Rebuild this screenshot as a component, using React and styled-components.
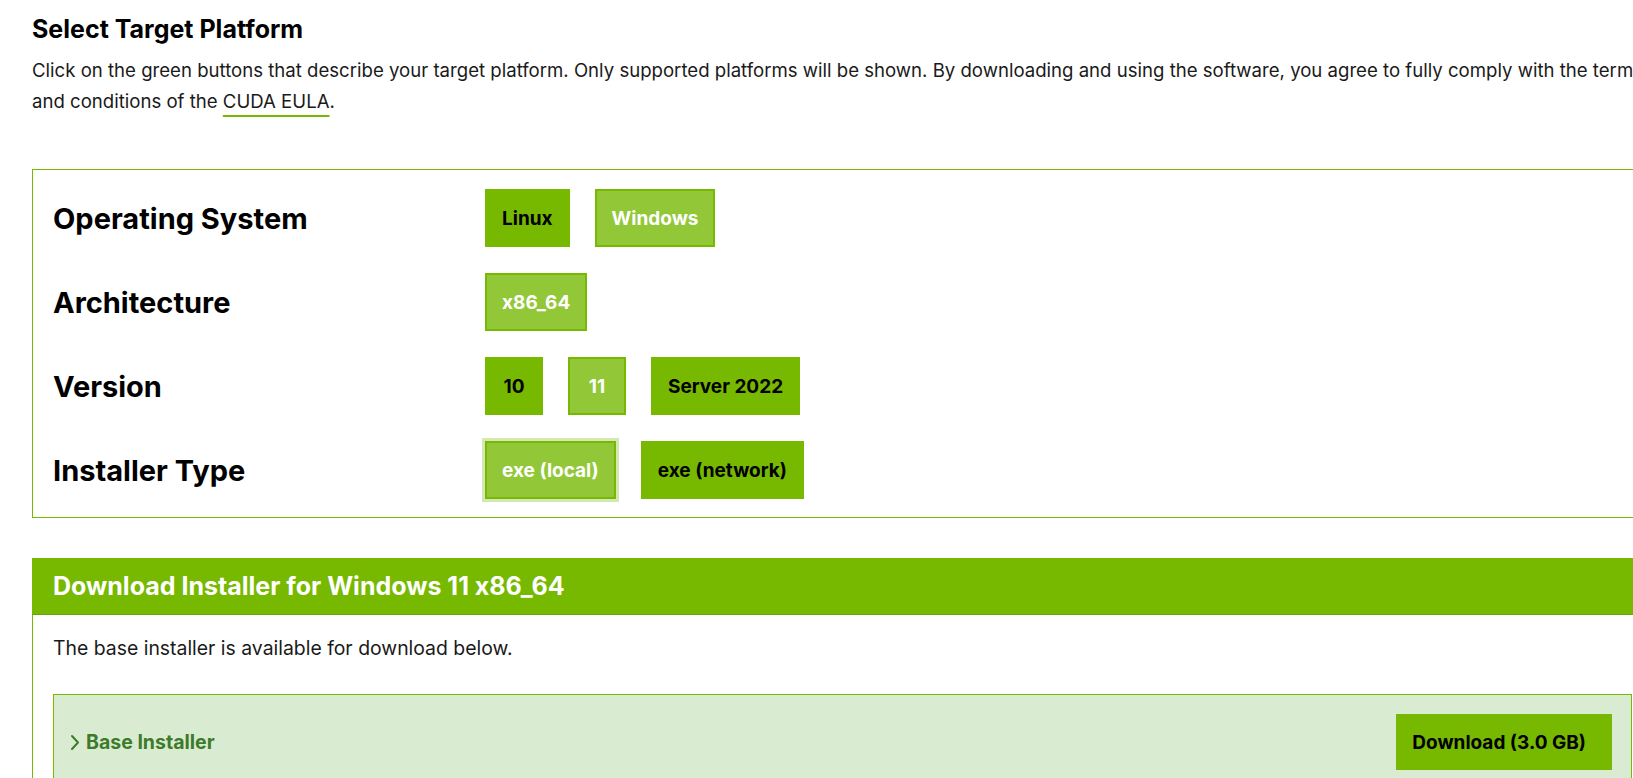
import React from "react";
import styled, { createGlobalStyle, css } from "styled-components";

const GREEN = "#76b900";
const GREEN_LIGHT = "#92c837";

const GlobalStyle = createGlobalStyle`
  html, body {
    margin: 0;
    padding: 0;
    background: #ffffff;
    overflow: hidden;
  }
  body {
    font-family: Inter, "Liberation Sans", Arial, sans-serif;
    font-feature-settings: "calt" 0;
    color: #1a1a1a;
  }
  * { box-sizing: border-box; }
`;

const Page = styled.main`
  width: 1620px;
  margin-left: 32px;
  padding-top: 14px;
`;

const Title = styled.h2`
  margin: 0;
  font-size: 25px;
  line-height: 30px;
  font-weight: 700;
  color: #000;
`;

const Intro = styled.p`
  margin: 11px 0 0;
  font-size: 18.6px;
  line-height: 31px;
  font-weight: 400;
  color: #1a1a1a;
`;

const EulaLink = styled.a`
  color: #1a1a1a;
  text-decoration: underline;
  text-decoration-color: ${GREEN};
  text-decoration-thickness: 2px;
  text-underline-offset: 7px;
`;

const SelectorBox = styled.section`
  margin-top: 52px;
  border: 1px solid ${GREEN};
  border-right: none;
  padding: 19px 20px 18px 20px;
  display: flex;
  flex-direction: column;
  gap: 26px;
`;

const SelectorRow = styled.div`
  display: grid;
  grid-template-columns: 432px 1fr;
  align-items: center;
  height: 58px;
`;

const RowLabel = styled.div`
  font-size: 29px;
  font-weight: 700;
  color: #000;
`;

const ButtonGroup = styled.div`
  display: flex;
  gap: 25px;
  height: 100%;
`;

const OptionButton = styled.button`
  font-family: inherit;
  font-feature-settings: "calt" 0;
  height: 58px;
  min-width: 58px;
  padding: 0 15px;
  font-size: 19px;
  font-weight: 700;
  border: 2px solid ${GREEN};
  background: ${GREEN};
  color: #000;
  cursor: pointer;
  ${(p) =>
    p.$selected &&
    css`
      background: ${GREEN_LIGHT};
      color: #fff;
    `}
  ${(p) =>
    p.$focused &&
    css`
      box-shadow: 0 0 0 3px #d3e8b2;
    `}
`;

const DownloadPanel = styled.section`
  margin-top: 40px;
  border-left: 1px solid ${GREEN};
`;

const DownloadHeader = styled.h3`
  margin: 0 0 0 -1px;
  height: 57px;
  display: flex;
  align-items: center;
  padding: 0 21px;
  background: ${GREEN};
  border-bottom: 1px solid #6aa400;
  color: #fff;
  font-size: 25px;
  font-weight: 700;
`;

const DownloadBody = styled.div`
  padding: 19px 20px 20px 20px;
`;

const BodyText = styled.p`
  margin: 0;
  font-size: 19.4px;
  line-height: 28px;
  color: #1a1a1a;
`;

const InstallerCard = styled.div`
  margin-top: 32px;
  background: #d9ecd2;
  border: 1px solid ${GREEN};
  padding: 19px 19px 19px 16px;
  display: flex;
  align-items: center;
  justify-content: space-between;
`;

const CardTitle = styled.div`
  display: flex;
  align-items: center;
  gap: 6px;
  color: #3d7b2a;
  font-size: 19.5px;
  font-weight: 700;
`;

const DownloadButton = styled.button`
  font-family: inherit;
  height: 56px;
  padding: 0 26px 0 16px;
  background: ${GREEN};
  border: none;
  color: #000;
  font-size: 19px;
  font-weight: 700;
  cursor: pointer;
`;

const Chevron = () => (
  <svg width="10" height="17" viewBox="0 0 10 17" aria-hidden="true">
    <path d="M2 2 L8 8.5 L2 15" fill="none" stroke="#3d7b2a" strokeWidth="2" strokeLinecap="round" strokeLinejoin="round" />
  </svg>
);

const rows = [
  { label: "Operating System", options: [{ t: "Linux" }, { t: "Windows", sel: true }] },
  { label: "Architecture", options: [{ t: "x86_64", sel: true }] },
  { label: "Version", options: [{ t: "10" }, { t: "11", sel: true }, { t: "Server 2022" }] },
  { label: "Installer Type", options: [{ t: "exe (local)", sel: true, focus: true }, { t: "exe (network)" }] },
];

export default function App() {
  return (
    <>
      <GlobalStyle />
      <Page>
        <Title>Select Target Platform</Title>
        <Intro>
          Click on the green buttons that describe your target platform. Only supported platforms will be shown. By downloading and using the software, you agree to fully comply with the terms and conditions of the <EulaLink href="#">CUDA EULA</EulaLink>.
        </Intro>
        <SelectorBox>
          {rows.map((r) => (
            <SelectorRow key={r.label}>
              <RowLabel>{r.label}</RowLabel>
              <ButtonGroup>
                {r.options.map((o) => (
                  <OptionButton key={o.t} $selected={o.sel} $focused={o.focus}>
                    {o.t}
                  </OptionButton>
                ))}
              </ButtonGroup>
            </SelectorRow>
          ))}
        </SelectorBox>
        <DownloadPanel>
          <DownloadHeader>Download Installer for Windows 11 x86_64</DownloadHeader>
          <DownloadBody>
            <BodyText>The base installer is available for download below.</BodyText>
            <InstallerCard>
              <CardTitle>
                <Chevron />
                Base Installer
              </CardTitle>
              <DownloadButton>Download (3.0 GB)</DownloadButton>
            </InstallerCard>
          </DownloadBody>
        </DownloadPanel>
      </Page>
    </>
  );
}
